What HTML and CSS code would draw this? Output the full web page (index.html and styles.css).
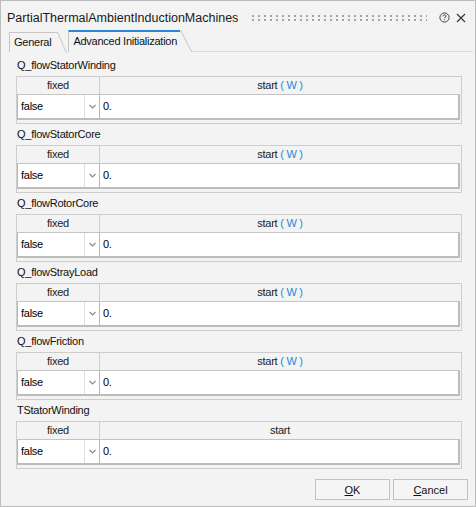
FILE: index.html
```html
<!DOCTYPE html>
<html>
<head>
<meta charset="utf-8">
<link rel="stylesheet" href="styles.css">
</head>
<body>
<div class="window">
  <div class="titlebar">
    <span class="title">PartialThermalAmbientInductionMachines</span>
    <span class="grip"></span>
    <svg class="help" width="11" height="11" viewBox="0 0 11 11"><circle cx="5.5" cy="5.5" r="4.6" fill="none" stroke="#444" stroke-width="1"/><path d="M4 4.3 C4 3.2 4.8 2.8 5.5 2.8 C6.3 2.8 7 3.3 7 4.1 C7 5 5.6 5.2 5.6 6.3" fill="none" stroke="#444" stroke-width="1"/><rect x="5.1" y="7.2" width="1" height="1" fill="#444"/></svg>
    <svg class="close" width="10" height="10" viewBox="0 0 10 10"><path d="M1 1 L9 9 M9 1 L1 9" stroke="#333" stroke-width="1.1"/></svg>
  </div>
  <div class="tabs">
    <div class="tab">General</div>
    <div class="tab active">Advanced Initialization</div>
    <div class="tabline"></div>
  </div>
  <div class="content">
    <section class="group">
      <div class="glabel">Q_flowStatorWinding</div>
      <div class="grid">
        <div class="hrow"><div class="hfixed">fixed</div><div class="hstart">start <span class="unit">( W )</span></div></div>
        <div class="drow"><div class="dd"><span class="ddval">false</span><span class="ddarrow"><svg width="7" height="5" viewBox="0 0 7 5"><path d="M0.5 1 L3.5 4 L6.5 1" fill="none" stroke="#8a8a8a" stroke-width="1.2"/></svg></span></div><div class="val">0.</div></div>
      </div>
    </section>
    <section class="group">
      <div class="glabel">Q_flowStatorCore</div>
      <div class="grid">
        <div class="hrow"><div class="hfixed">fixed</div><div class="hstart">start <span class="unit">( W )</span></div></div>
        <div class="drow"><div class="dd"><span class="ddval">false</span><span class="ddarrow"><svg width="7" height="5" viewBox="0 0 7 5"><path d="M0.5 1 L3.5 4 L6.5 1" fill="none" stroke="#8a8a8a" stroke-width="1.2"/></svg></span></div><div class="val">0.</div></div>
      </div>
    </section>
    <section class="group">
      <div class="glabel">Q_flowRotorCore</div>
      <div class="grid">
        <div class="hrow"><div class="hfixed">fixed</div><div class="hstart">start <span class="unit">( W )</span></div></div>
        <div class="drow"><div class="dd"><span class="ddval">false</span><span class="ddarrow"><svg width="7" height="5" viewBox="0 0 7 5"><path d="M0.5 1 L3.5 4 L6.5 1" fill="none" stroke="#8a8a8a" stroke-width="1.2"/></svg></span></div><div class="val">0.</div></div>
      </div>
    </section>
    <section class="group">
      <div class="glabel">Q_flowStrayLoad</div>
      <div class="grid">
        <div class="hrow"><div class="hfixed">fixed</div><div class="hstart">start <span class="unit">( W )</span></div></div>
        <div class="drow"><div class="dd"><span class="ddval">false</span><span class="ddarrow"><svg width="7" height="5" viewBox="0 0 7 5"><path d="M0.5 1 L3.5 4 L6.5 1" fill="none" stroke="#8a8a8a" stroke-width="1.2"/></svg></span></div><div class="val">0.</div></div>
      </div>
    </section>
    <section class="group">
      <div class="glabel">Q_flowFriction</div>
      <div class="grid">
        <div class="hrow"><div class="hfixed">fixed</div><div class="hstart">start <span class="unit">( W )</span></div></div>
        <div class="drow"><div class="dd"><span class="ddval">false</span><span class="ddarrow"><svg width="7" height="5" viewBox="0 0 7 5"><path d="M0.5 1 L3.5 4 L6.5 1" fill="none" stroke="#8a8a8a" stroke-width="1.2"/></svg></span></div><div class="val">0.</div></div>
      </div>
    </section>
    <section class="group">
      <div class="glabel">TStatorWinding</div>
      <div class="grid">
        <div class="hrow"><div class="hfixed">fixed</div><div class="hstart">start</div></div>
        <div class="drow"><div class="dd"><span class="ddval">false</span><span class="ddarrow"><svg width="7" height="5" viewBox="0 0 7 5"><path d="M0.5 1 L3.5 4 L6.5 1" fill="none" stroke="#8a8a8a" stroke-width="1.2"/></svg></span></div><div class="val">0.</div></div>
      </div>
    </section>
  </div>
  <div class="buttons">
    <button class="btn"><u>O</u>K</button>
    <button class="btn"><u>C</u>ancel</button>
  </div>
</div>
</body>
</html>
```
FILE: styles.css
```css
html, body {
  margin: 0;
  padding: 0;
  background: #f3f3f3;
}
body {
  font-family: "Liberation Sans", Arial, sans-serif;
  font-size: 11px;
  letter-spacing: -0.25px;
  color: #111;
}
.window {
  width: 476px;
  height: 507px;
  box-sizing: border-box;
  border: 1px solid #bcbcbc;
  background: #f3f3f3;
  display: flex;
  flex-direction: column;
}
.titlebar {
  height: 29px;
  display: flex;
  align-items: center;
  padding: 4px 9px 0 6px;
  box-sizing: border-box;
}
.title {
  font-size: 12.5px;
  letter-spacing: 0;
  color: #1a1a1a;
  white-space: nowrap;
}
.grip {
  flex: 1;
  height: 6px;
  margin: 0 12px 0 14px;
  background-image:
    linear-gradient(to bottom, transparent 0 2px, #f3f3f3 2px 4px),
    linear-gradient(to right, #a3a3a3 0 2px, transparent 2px 6px);
  background-size: 6px 4px;
}
.help {
  display: block;
  margin-right: 6px;
}
.close {
  display: block;
}
.tabs {
  height: 22px;
  display: flex;
  align-items: flex-end;
  padding-left: 8px;
  box-sizing: border-box;
}
.tab {
  position: relative;
  height: 19px;
  line-height: 19px;
  padding: 0 6px 0 4px;
  border-left: 1px solid #c6c6c6;
  border-top: 1px solid #c6c6c6;
  color: #111;
  font-size: 11px;
  white-space: nowrap;
}
.tab::after {
  content: "";
  position: absolute;
  right: -1px;
  top: -1px;
  width: 1px;
  height: 21px;
  background: #c6c6c6;
  transform: skewX(23deg);
  transform-origin: top left;
}
.tab.active {
  height: 20px;
  line-height: 19px;
  margin-left: 11px;
  border-top: 2px solid #2b86d4;
  padding: 0 3px 0 4px;
}
.tab.active::after {
  top: -2px;
  height: 22px;
  transform: skewX(27deg);
}
.tabline {
  flex: 1;
  margin-left: 11px;
  margin-right: 2px;
  border-bottom: 1px solid #dcdcdc;
}
.content {
  padding: 3px 0 0 15px;
}
.group {
  height: 69px;
}
.glabel {
  height: 21px;
  line-height: 21px;
  padding-left: 1px;
  color: #111;
}
.grid {
  width: 446px;
  box-sizing: border-box;
  border: 1px solid #cdcdcd;
  padding: 0 1px 3px 0;
  background: #f3f3f3;
}
.hrow {
  display: flex;
  height: 18px;
  border-bottom: 1px solid #c4c4c4;
  box-sizing: border-box;
  line-height: 17px;
}
.hfixed {
  width: 83px;
  box-sizing: border-box;
  border-right: 1px solid #cdcdcd;
  text-align: center;
  color: #222;
}
.hstart {
  flex: 1;
  text-align: center;
  color: #222;
}
.unit {
  color: #2b86d4;
}
.drow {
  display: flex;
  height: 25px;
}
.dd {
  width: 82px;
  box-sizing: border-box;
  background: #fff;
  border-left: 1px solid #b8b8b8;
  border-bottom: 2px solid #bcbcbc;
  display: flex;
}
.ddval {
  flex: 1;
  padding-left: 3px;
  line-height: 22px;
  color: #000;
}
.ddarrow {
  width: 14px;
  border-left: 1px solid #dedede;
  display: flex;
  align-items: center;
  justify-content: center;
}
.ddarrow svg {
  display: block;
}
.val {
  flex: 1;
  background: #fff;
  border-left: 1px solid #b8b8b8;
  border-right: 2px solid #bcbcbc;
  border-bottom: 2px solid #bcbcbc;
  padding-left: 3px;
  line-height: 22px;
  color: #000;
}
.buttons {
  margin-top: 10px;
  display: flex;
  justify-content: flex-end;
  gap: 3px;
  padding-right: 7px;
}
.btn {
  width: 75px;
  height: 21px;
  box-sizing: border-box;
  border: 1px solid #c2c2c2;
  border-radius: 0;
  background: #f5f5f5;
  font-family: "Liberation Sans", Arial, sans-serif;
  font-size: 11px;
  color: #111;
  padding: 0;
}
```
